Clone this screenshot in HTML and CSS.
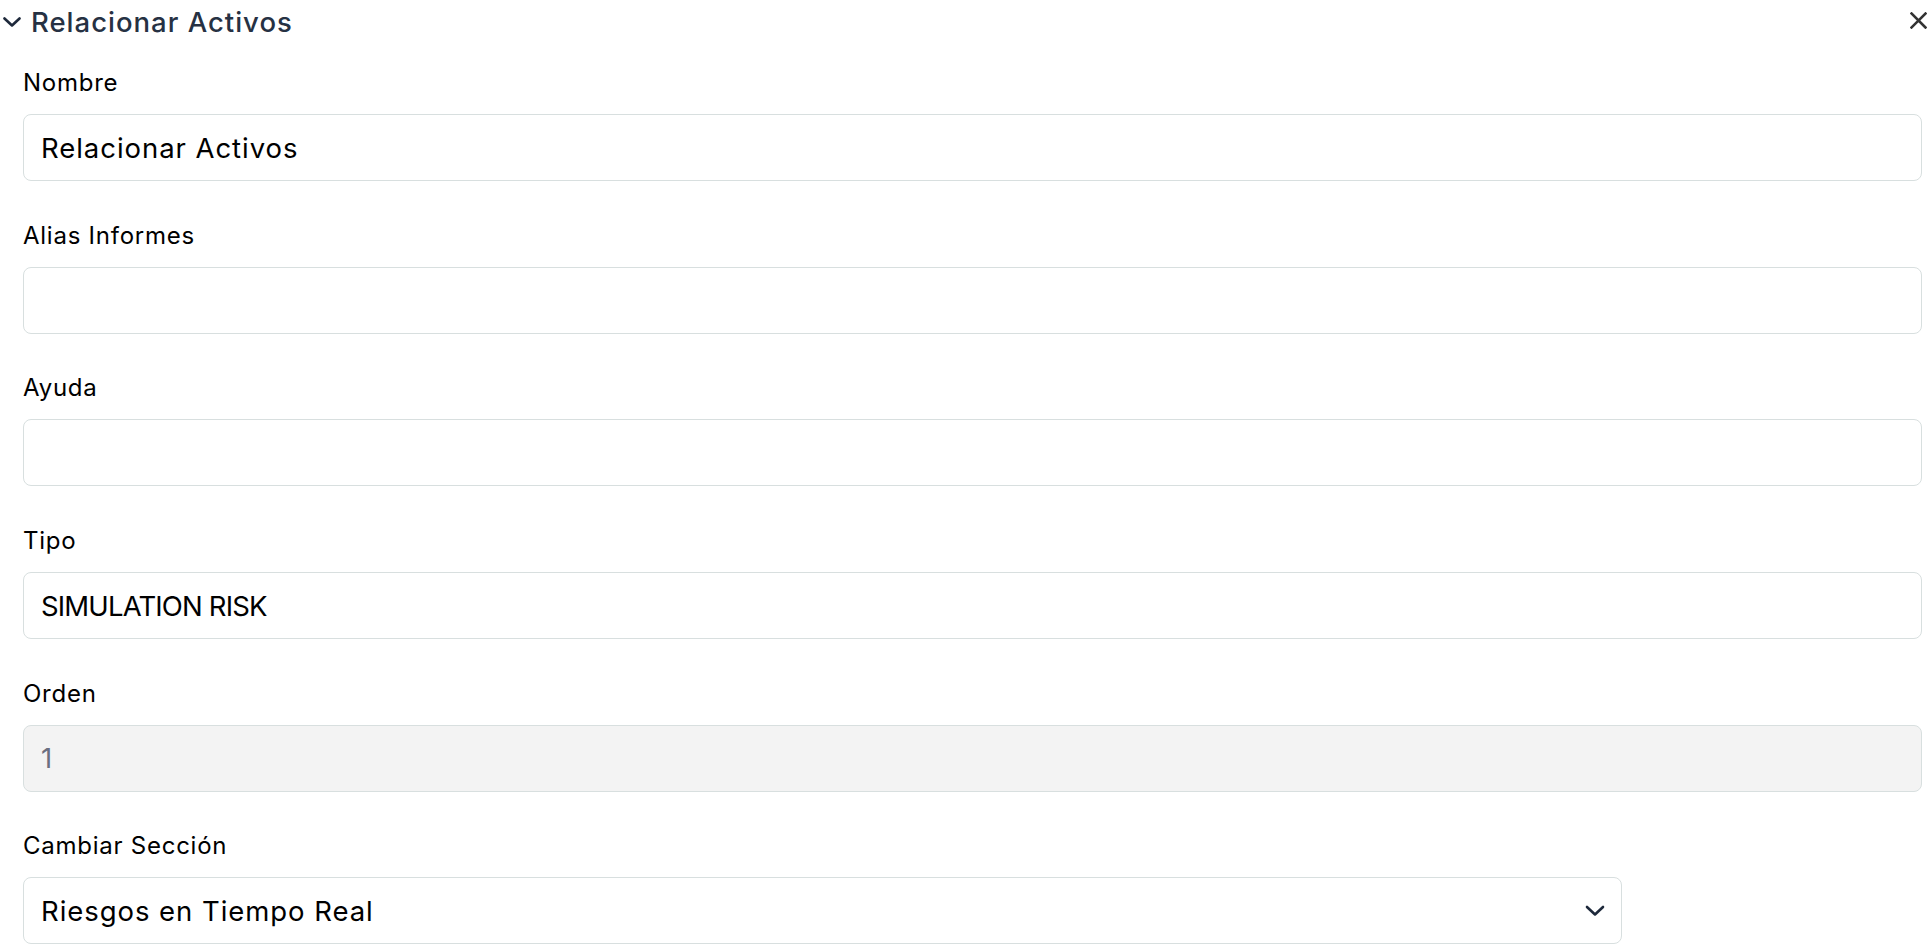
FILE: index.html
```html
<!DOCTYPE html>
<html lang="es">
<head>
<meta charset="utf-8">
<title>Relacionar Activos</title>
<link rel="stylesheet" href="styles.css">
</head>
<body>
<div class="panel">
  <div class="panel-header">
    <div class="panel-title">
      <svg class="chev" width="18" height="10" viewBox="0 0 18 10"><path d="M1.5 1.5 L9 8.5 L16.5 1.5" fill="none" stroke="#1e293b" stroke-width="2.6" stroke-linecap="round" stroke-linejoin="round"/></svg>
      <span>Relacionar Activos</span>
    </div>
    <svg class="close" width="17" height="17" viewBox="0 0 17 17"><path d="M1.5 1.5 L15.5 15.5 M15.5 1.5 L1.5 15.5" fill="none" stroke="#333" stroke-width="2.5" stroke-linecap="square"/></svg>
  </div>
  <div class="fields">
    <div class="field">
      <label class="label">Nombre</label>
      <div class="input">Relacionar Activos</div>
    </div>
    <div class="field">
      <label class="label">Alias Informes</label>
      <div class="input"></div>
    </div>
    <div class="field">
      <label class="label">Ayuda</label>
      <div class="input"></div>
    </div>
    <div class="field">
      <label class="label">Tipo</label>
      <div class="input caps">SIMULATION RISK</div>
    </div>
    <div class="field">
      <label class="label">Orden</label>
      <div class="input disabled">1</div>
    </div>
    <div class="field">
      <label class="label">Cambiar Sección</label>
      <div class="input select">
        <span>Riesgos en Tiempo Real</span>
        <svg width="20" height="12" viewBox="0 0 20 12"><path d="M2 2 L10 9.5 L18 2" fill="none" stroke="#1e293b" stroke-width="2.6" stroke-linecap="round" stroke-linejoin="round"/></svg>
      </div>
    </div>
  </div>
</div>
</body>
</html>
```

FILE: styles.css
```css
html, body {
  margin: 0;
  padding: 0;
  background: #ffffff;
}
body {
  font-family: Inter, "Noto Sans", sans-serif;
  color: #000;
}
.panel {
  width: 1930px;
  height: 946px;
  overflow: hidden;
}
.panel-header {
  display: flex;
  align-items: center;
  justify-content: space-between;
  height: 42px;
  padding: 2px 3px 0 3px;
  box-sizing: border-box;
}
.panel-title {
  display: flex;
  align-items: center;
  gap: 10px;
  font-size: 27.5px;
  font-weight: 500;
  color: #263143;
  line-height: 40px;
  letter-spacing: 1px;
}
.chev {
  flex: none;
}
.close {
  margin-top: -3px;
  margin-right: 0;
}
.fields {
  padding: 23px 8px 0 23px;
  display: flex;
  flex-direction: column;
  gap: 36.7px;
}
.field {
  display: flex;
  flex-direction: column;
  gap: 13px;
}
.label {
  font-size: 24px;
  line-height: 36px;
  color: #000;
  letter-spacing: 0.75px;
}
.input {
  height: 67px;
  box-sizing: border-box;
  border: 1.5px solid #d8dfdf;
  border-radius: 8px;
  padding: 0 17px;
  display: flex;
  align-items: center;
  font-size: 27.5px;
  color: #000;
  background: #fff;
  letter-spacing: 0.95px;
}
.input.caps {
  letter-spacing: -0.85px;
}
.input.disabled {
  background: #f3f3f3;
  color: #6b6f80;
}
.input.select {
  width: 1599px;
  justify-content: space-between;
  padding-right: 16px;
}
```
